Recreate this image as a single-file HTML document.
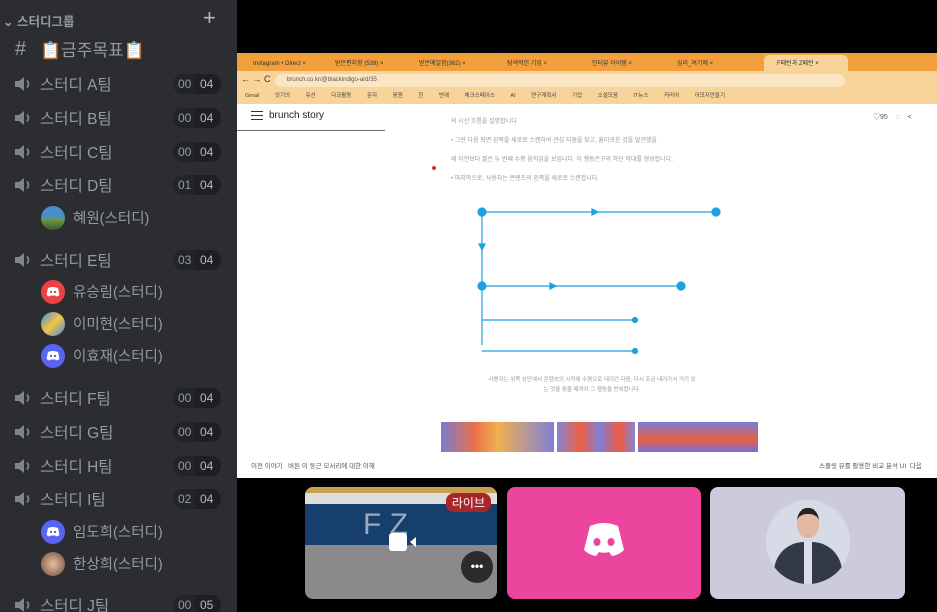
<!DOCTYPE html>
<html><head><meta charset="utf-8"><style>
*{margin:0;padding:0;box-sizing:border-box}
html{width:937px;height:612px;overflow:hidden}
body{width:937px;height:612px;background:#000;position:relative;overflow:hidden;font-family:"Liberation Sans","Noto Sans CJK KR",sans-serif}
#side{position:absolute;left:0;top:0;width:237px;height:612px;background:#2b2d31;overflow:hidden}
.row{position:absolute;left:0;width:237px;height:30px;color:#949ba4;font-size:15.5px;line-height:30px}
.row .ic{position:absolute;left:14px;top:8px;display:block;height:14px}
.row .ic svg{display:block}
.row .t{position:absolute;left:40px;top:2px}
.bd{position:absolute;left:173px;top:5px;width:48px;height:20px;border-radius:10px;background:#232428;font-size:12px;line-height:20px;color:#949ba4}
.bd b{font-weight:normal;position:absolute;left:5px}
.bd i{font-style:normal;position:absolute;right:0;top:0;width:26px;height:20px;background:#1e1f22;border-radius:0 10px 10px 0;padding-left:5px;color:#b5bac1}
.mem{position:absolute;left:41px;width:190px;height:26px;color:#949ba4;font-size:14.5px;line-height:26px}
.mem .av{position:absolute;left:0;top:1px;width:24px;height:24px;border-radius:50%;overflow:hidden}
.mem .av svg{display:block}
.mem .n{position:absolute;left:32px;top:1px}
#br{position:absolute;left:237px;top:53px;width:700px;height:425px;background:#fff;overflow:hidden}
.tab{position:absolute;top:4px;height:14px;font-size:6px;color:#333;line-height:14px}
</style></head><body>
<div id="side">
 <div style="position:absolute;left:3px;top:11px;color:#949ba4;font-size:12.5px;font-weight:bold">⌄ 스터디그룹</div>
 <div style="position:absolute;left:203px;top:5px;color:#b5bac1;font-size:22px">+</div>
 <div class="row" style="top:34px"><span class="ic" style="top:0;font-size:20px;left:15px;height:30px">#</span><span class="t" style="font-size:17px">📋금주목표📋</span></div>
 <div id="ch"></div>
</div>
<script>
const spk='<svg width="20" height="14" viewBox="0 0 20 14"><path d="M1 4h4l5-4v14l-5-4H1z" fill="#80848e"/><path d="M13 3.5q3 3.5 0 7" stroke="#80848e" stroke-width="1.8" fill="none"/></svg>';
const rows=[['A',84,'00','04'],['B',118,'00','04'],['C',152,'00','04'],['D',185,'01','04'],['E',260,'03','04'],['F',398,'00','04'],['G',432,'00','04'],['H',466,'00','04'],['I',499,'02','04'],['J',605,'00','05']];
let h='';
rows.forEach(r=>{h+=`<div class="row" style="top:${r[1]-15}px"><span class="ic">${spk}</span><span class="t">스터디 ${r[0]}팀</span><span class="bd"><b>${r[2]}</b><i>${r[3]}</i></span></div>`});
const dis='<svg width="24" height="24" viewBox="0 0 24 24"><path d="M7 8q5-2 10 0l1.5 7q-2 1.5-3.5 1.5l-.8-1.2q-2.2.6-4.4 0L9 16.5Q7.5 16.5 5.5 15z" fill="#fff"/><circle cx="10" cy="12" r="1.2" fill="COL"/><circle cx="14" cy="12" r="1.2" fill="COL"/></svg>';
const mem=[['혜원',218,'linear-gradient(#4a8fc9 0 45%,#6a9a4a 55%,#3b5a2a)',''],['유승림',292,'#ed4245',dis.replace(/COL/g,'#ed4245')],['이미현',324,'linear-gradient(135deg,#3a8ae6,#f5c542 50%,#3a8ae6)',''],['이효재',356,'#5865f2',dis.replace(/COL/g,'#5865f2')],['임도희',532,'#5865f2',dis.replace(/COL/g,'#5865f2')],['한상희',564,'radial-gradient(#e8c0a0,#6a4a3a)','']];
mem.forEach(m=>{h+=`<div class="mem" style="top:${m[1]-13}px"><span class="av" style="background:${m[2]}">${m[3]}</span><span class="n">${m[0]}(스터디)</span></div>`});
document.getElementById('ch').outerHTML=h;
</script>
<div id="br">
 <div style="position:absolute;left:0;top:0;width:700px;height:18px;background:#f2a03d"></div>
 <div style="position:absolute;left:527px;top:2px;width:84px;height:16px;background:#f8d49a;border-radius:5px 5px 0 0"></div>
 <div class="tab" style="left:16px">Instagram • Direct ×</div>
 <div class="tab" style="left:98px">받은편지함 (539) ×</div>
 <div class="tab" style="left:182px">받은메일함(362) ×</div>
 <div class="tab" style="left:270px">탐색적인 기업 ×</div>
 <div class="tab" style="left:355px">인터뷰 아이템 ×</div>
 <div class="tab" style="left:440px">심리_여기에 ×</div>
 <div class="tab" style="left:540px">F패턴과 Z패턴 ×</div>
 <div style="position:absolute;left:0;top:18px;width:700px;height:18px;background:#f8d49a"></div>
 <div style="position:absolute;left:38px;top:21px;width:570px;height:13px;background:#fbe6c3;border-radius:7px;font-size:6px;color:#555;padding:3px 0 0 12px">brunch.co.kr/@blackindigo-ard/35</div>
 <div style="position:absolute;left:4px;top:21px;font-size:9px;color:#333">← → C</div>
 <div style="position:absolute;left:0;top:36px;width:700px;height:15px;background:#f8d49a;font-size:5.5px;color:#444;line-height:15px;padding-left:8px;word-spacing:14px">Gmail 잇기의 유산 다과활동 문자 음원 한 번에 체크스페이스 AI 연구계획서 기업 소설모음 IT뉴스 커리어 이모지만들기</div>
 <div style="position:absolute;left:0;top:51px;width:148px;height:27px;border-bottom:1px solid #666"></div>
 <div style="position:absolute;left:14px;top:58px;width:12px;height:9px;border-top:1.5px solid #333;border-bottom:1.5px solid #333"><div style="margin-top:2.5px;border-top:1.5px solid #333"></div></div>
 <div style="position:absolute;left:32px;top:57px;font-size:10px;color:#222">brunch story</div>
 <div style="position:absolute;left:636px;top:59px;font-size:7px;color:#555">♡95 &nbsp;&nbsp; ◌ &nbsp;&nbsp; &lt;</div>
 <div style="position:absolute;left:214px;top:60px;width:300px;font-size:6px;color:#999;line-height:19px">의 시선 흐름을 설명합니다<br>• 그런 다음 화면 왼쪽을 세로로 스캔하여 관심 지점을 찾고, 흥미로운 것을 발견했을<br>때 이전보다 짧은 두 번째 수평 움직임을 보입니다. 이 행동은 F의 하단 막대를 형성합니다.<br>• 마지막으로, 사용자는 콘텐츠의 왼쪽을 세로로 스캔합니다.</div>
 <div style="position:absolute;left:195px;top:113px;width:4px;height:4px;border-radius:50%;background:#c33"></div>
 <svg style="position:absolute;left:0;top:0" width="700" height="425">
  <g stroke="#1da1e0" stroke-width="1.2" fill="#1da1e0">
   <line x1="245" y1="159" x2="479" y2="159"/><line x1="245" y1="159" x2="245" y2="292"/>
   <line x1="245" y1="233" x2="444" y2="233"/><line x1="245" y1="267" x2="398" y2="267"/><line x1="245" y1="298" x2="398" y2="298"/>
   <circle cx="245" cy="159" r="4"/><circle cx="479" cy="159" r="4"/><circle cx="245" cy="233" r="4"/><circle cx="444" cy="233" r="4"/><circle cx="398" cy="267" r="2.5"/><circle cx="398" cy="298" r="2.5"/>
   <path d="M355 156l6 3-6 3z"/><path d="M242 191l3 6 3-6z"/><path d="M313 230l6 3-6 3z"/>
  </g>
 </svg>
 <div style="position:absolute;left:230px;top:322px;width:250px;text-align:center;font-size:5.5px;color:#999;line-height:10px">사용자는 위쪽 상단에서 콘텐츠의 시작에 수평으로 내려간 다음, 다시 조금 내려가서 거기 있<br>는 것을 찾을 때까지 그 행동을 반복합니다.</div>
 <div style="position:absolute;left:204px;top:369px;width:113px;height:30px;background:linear-gradient(90deg,#7b7bd0,#e8704a 30%,#f0b050 50%,#8080d8)"></div>
 <div style="position:absolute;left:320px;top:369px;width:78px;height:30px;background:linear-gradient(90deg,#8585d5,#ef6040 30%,#7f7fd8 55%,#ee5a40 80%,#8585d5)"></div>
 <div style="position:absolute;left:401px;top:369px;width:120px;height:30px;background:linear-gradient(180deg,#7a7ad8,#e86040 60%,#7070e0)"></div>
 <div style="position:absolute;left:14px;top:407px;font-size:6.5px;color:#555">이전 이야기 &nbsp; 버튼 이 둥근 모서리에 대한 이해</div>
 <div style="position:absolute;left:582px;top:407px;font-size:6.5px;color:#555">스플릿 뷰를 활용한 비교 분석 UI &nbsp;다음</div>
</div>
<div style="position:absolute;left:305px;top:487px;width:192px;height:112px;border-radius:8px;overflow:hidden;background:#8a8a8a">
 <div style="height:6px;background:#c9a050"></div>
 <div style="height:11px;background:#ddd"></div>
 <div style="height:41px;background:#173f6e;color:#9ab;font-size:30px;padding-left:58px;line-height:41px">F Z</div>
 <div style="position:absolute;right:6px;top:6px;background:#a8252a;color:#fff;font-size:12px;padding:1px 6px;border-radius:8px">라이브</div>
 <div style="position:absolute;left:84px;top:46px;width:18px;height:18px;background:#fff;border-radius:3px"></div>
 <div style="position:absolute;left:100px;top:50px;border:5px solid transparent;border-right:6px solid #fff;width:0"></div>
 <div style="position:absolute;right:4px;top:64px;width:32px;height:32px;border-radius:50%;background:#2b2b2b;color:#fff;text-align:center;font-size:12px;line-height:30px;font-weight:bold">•••</div>
</div>
<div style="position:absolute;left:507px;top:487px;width:194px;height:112px;border-radius:8px;background:#eb459e">
 <svg style="position:absolute;left:73px;top:35px" width="48" height="38" viewBox="0 0 48 38"><path d="M10 4q14-6 28 0l6 24q-5 5-12 6l-3-4q-5 1.5-10 0l-3 4q-7-1-12-6z" fill="#fff"/><ellipse cx="17" cy="20" rx="3.5" ry="4" fill="#eb459e"/><ellipse cx="31" cy="20" rx="3.5" ry="4" fill="#eb459e"/></svg>
</div>
<div style="position:absolute;left:710px;top:487px;width:195px;height:112px;border-radius:8px;background:#cbcbdb">
 <div style="position:absolute;left:56px;top:13px;width:84px;height:84px;border-radius:50%;background:#d7dbe8;overflow:hidden">
  <div style="position:absolute;left:31px;top:8px;width:22px;height:30px;border-radius:45%;background:#e2b8a0;border-top:6px solid #222"></div>
  <div style="position:absolute;left:8px;top:42px;width:68px;height:50px;border-radius:30px 30px 0 0;background:#333a45"></div>
  <div style="position:absolute;left:38px;top:42px;width:8px;height:42px;background:#dde"></div>
 </div>
</div>
</body></html>
